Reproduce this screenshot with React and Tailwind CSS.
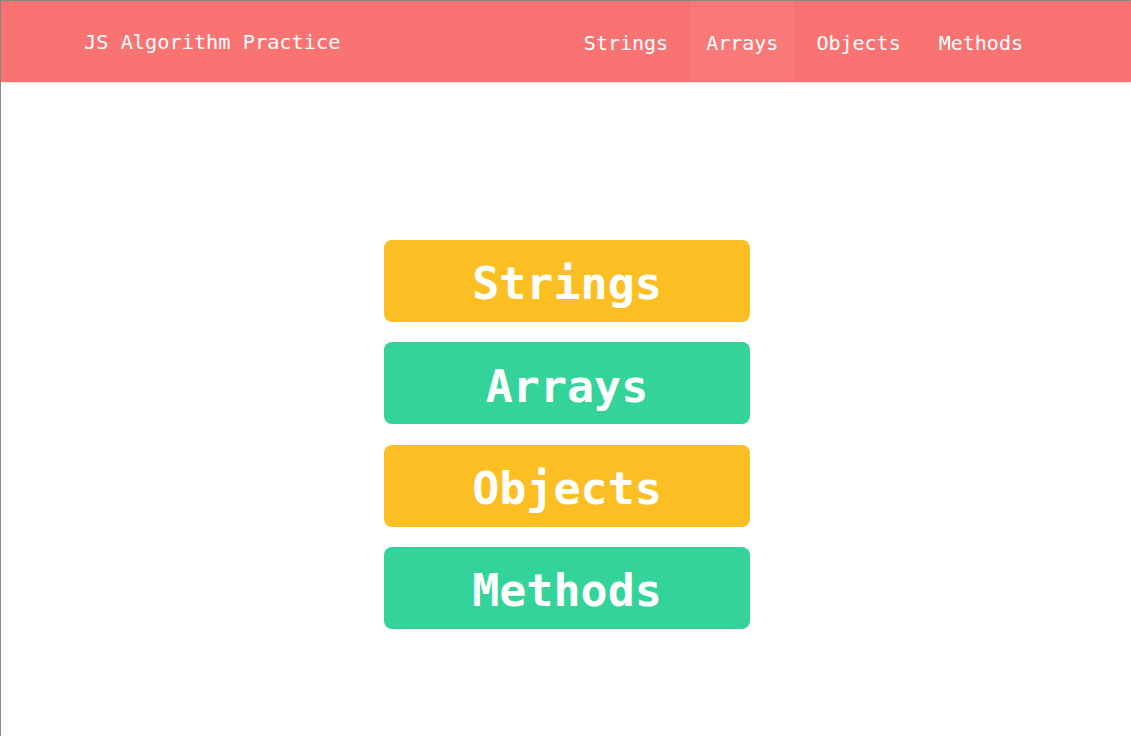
import React from 'react';

const links = ['Strings', 'Arrays', 'Objects', 'Methods'];

const cards = [
  { label: 'Strings', color: 'bg-[#fbbf24]' },
  { label: 'Arrays', color: 'bg-[#34d399]' },
  { label: 'Objects', color: 'bg-[#fbbf24]' },
  { label: 'Methods', color: 'bg-[#34d399]' },
];

export default function App() {
  return (
    <div
      className="min-h-[736px] bg-white border-l border-t border-[#8a8a8a] text-white"
      style={{ fontFamily: '"DejaVu Sans Mono", "Liberation Mono", monospace' }}
    >
      <header className="h-[81px] bg-[#fa7373] shadow-sm flex items-center justify-between pl-[83px] pr-[92px]">
        <span className="text-[20.3px] pt-[2px]">JS Algorithm Practice</span>
        <nav className="flex h-full gap-[6px]">
          {links.map(l => (
            <a
              key={l}
              className={`h-full flex items-center px-4 pt-[2px] text-[20px] ${l === 'Arrays' ? 'bg-[#fb7878]' : ''}`}
            >
              {l}
            </a>
          ))}
        </nav>
      </header>

      <main className="flex flex-col items-center pt-[158px] pl-[2px] gap-[20.4px]">
        {cards.map(c => (
          <button
            key={c.label}
            className={`w-[366px] h-[82px] rounded-lg ${c.color} flex items-center justify-center pt-[6px] text-[45px] font-bold text-white`}
          >
            {c.label}
          </button>
        ))}
      </main>
    </div>
  );
}
